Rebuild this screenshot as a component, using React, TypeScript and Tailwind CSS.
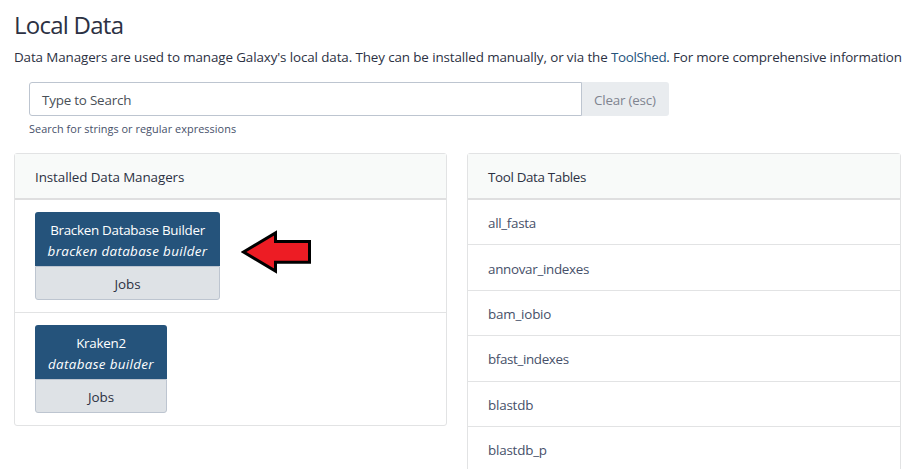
const tables = [
  { name: "all_fasta", row: "h-[45px] pt-[13px]", spacing: "tracking-[-0.3px]" },
  { name: "annovar_indexes", row: "h-[46px] pt-[14px]", spacing: "tracking-[-0.3px]" },
  { name: "bam_iobio", row: "h-[45px] pt-[13px]", spacing: "tracking-[-0.2px]" },
  { name: "bfast_indexes", row: "h-[46px] pt-[13px]", spacing: "tracking-[-0.36px]" },
  { name: "blastdb", row: "h-[45px] pt-[13px]", spacing: "tracking-[-0.2px]" },
  { name: "blastdb_p", row: "h-[46px] pt-[13px]", spacing: "tracking-[-0.2px]" },
];

function PanelHeader({ title, spacing }: { title: string; spacing: string }) {
  return (
    <div className={`${spacing} h-[46px] border-b-2 border-[#dfdfe0] bg-[#f8faf9] pl-5 pt-[13px] leading-[21px]`}>
      {title}
    </div>
  );
}

function Manager({ name, description, width }: { name: string; description: string; width: string }) {
  return (
    <div className={`${width} whitespace-nowrap text-center leading-[21px]`}>
      <div className="h-[54px] rounded-t-[3px] bg-[#25537b] pt-[8px] text-white">
        <div className="tracking-[-0.28px]">{name}</div>
        <div className="italic tracking-[0.35px]">{description}</div>
      </div>
      <div className="h-[34px] rounded-b-[3px] border border-[#bdc5d0] bg-[#dee2e6] pt-[7px]">Jobs</div>
    </div>
  );
}

export default function App() {
  return (
    <main className="h-[469px] w-[904px] overflow-hidden bg-white pl-[14px] pt-[9px] font-['Open_Sans','Noto_Sans',sans-serif] text-[13.4px] text-[#2c3143]">
      <h1 className="h-[32px] text-[24px] leading-[31px] tracking-[-0.75px]">Local Data</h1>
      <p className="mt-[6px] h-[21px] whitespace-nowrap leading-[21px] tracking-[-0.11px]">
        Data Managers are used to manage Galaxy's local data. They can be installed manually, or via the{" "}
        <a className="tracking-[-0.35px] text-[#25537b]">ToolShed</a>
        <span className="tracking-[-0.16px]">. For more comprehensive information</span>
      </p>
      <div className="ml-[15px] mt-[14px] flex h-[34px] w-[640px] tracking-[-0.2px]">
        <div className="w-[553px] rounded-l-[3px] border border-[#bdc5d0] pl-3 pt-[7px] leading-[21px] text-[#495057]">
          Type to Search
        </div>
        <div className="flex-1 rounded-r-[3px] bg-[#e9ecef] pl-3 pt-[8px] leading-[21px] text-[#808490]">Clear (esc)</div>
      </div>
      <div className="ml-[15px] mt-[4px] h-[18px] text-[10.88px] leading-[18px] tracking-[0.05px] text-[#465069]">
        Search for strings or regular expressions
      </div>
      <div className="mt-[15px] flex items-start gap-5">
        <section className="h-[273px] w-[433px] rounded-[3px] border border-[#e2e3e4]">
          <PanelHeader title="Installed Data Managers" spacing="tracking-[-0.08px]" />
          <div className="flex h-[113px] items-start border-b border-[#e2e3e4] pl-5 pt-3">
            <Manager name="Bracken Database Builder" description="bracken database builder" width="w-[185px]" />
            <svg className="ml-[21px] mt-[17px]" width="71" height="46" viewBox="0 0 71 46">
              <path d="M2.5 23L34.5 4V12.5H68.5V33.2H34.5V42Z" fill="#ed1c24" stroke="#000" strokeWidth="3" />
            </svg>
          </div>
          <div className="pl-5 pt-3">
            <Manager name="Kraken2" description="database builder" width="w-[132px]" />
          </div>
        </section>
        <section className="h-[400px] w-[434px] rounded-t-[3px] border border-[#e2e3e4]">
          <PanelHeader title="Tool Data Tables" spacing="tracking-[-0.34px]" />
          {tables.map(({ name, row, spacing }) => (
            <div key={name} className={`${row} ${spacing} border-b border-[#e2e3e4] pl-5 leading-[21px] text-[#465069]`}>
              {name}
            </div>
          ))}
        </section>
      </div>
    </main>
  );
}
